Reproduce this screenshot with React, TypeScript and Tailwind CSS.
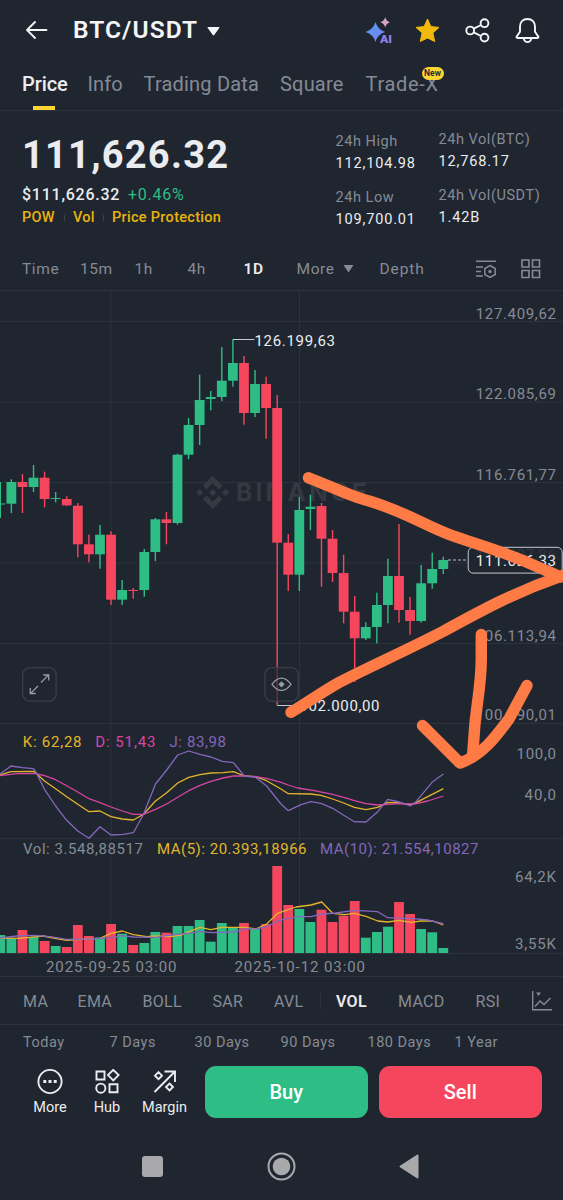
import clsx from 'clsx';
import React from 'react';

type Candle = [
  up: boolean,
  top: number,
  bottom: number,
  high: number,
  low: number,
  volume: number,
];

const GREEN = '#2ebd85';
const RED = '#f6465d';
const YELLOW = '#e3b52b';
const PINK = '#d845a4';
const PURPLE = '#8467bb';
const MUTED = '#858b95';
const GRID = '#2d333c';

const STEP = 11.075;

// body top, body bottom, high, low, top of the volume bar
const CANDLES: Candle[] = [
  [true, 503.5, 504.5, 482, 518, 935],
  [true, 482, 503.7, 479.3, 513, 938.3],
  [false, 482, 487, 474, 513, 930],
  [true, 477.7, 487, 465, 492, 937],
  [false, 477.7, 499, 471.7, 507.3, 941],
  [true, 498, 499, 492, 502.3, 946],
  [false, 499, 505.3, 496.3, 506, 947],
  [false, 505.7, 544.3, 503, 557.3, 925],
  [false, 544.3, 554.3, 534.7, 562.3, 936],
  [true, 534.7, 554.3, 525, 568.7, 937.5],
  [false, 534.7, 599.7, 531.3, 605, 924],
  [true, 590, 599.7, 580, 605, 933.7],
  [false, 590, 591, 588, 598.7, 945],
  [true, 552, 590, 549, 596.7, 943],
  [true, 519.3, 552, 518, 561, 932],
  [false, 519.3, 523, 512, 544.3, 932.7],
  [true, 454.7, 523, 453.7, 524.7, 926],
  [true, 425, 454.7, 418, 459.3, 926],
  [true, 400, 425, 374.7, 445, 920],
  [true, 397, 399, 391, 410.3, 941.7],
  [true, 380.7, 397, 347, 401, 923],
  [true, 363, 380.7, 339.5, 386.7, 928],
  [false, 363, 413, 356, 424.7, 923],
  [true, 384, 413, 370, 417, 929],
  [false, 384, 408, 376.7, 438.7, 924],
  [false, 408, 542.7, 395, 705, 866],
  [false, 542.7, 574.7, 534, 591, 905],
  [true, 510, 574.7, 497, 591, 909],
  [true, 506.7, 509, 494.7, 530, 922],
  [false, 506, 538.7, 503, 586.7, 909.7],
  [false, 538.7, 573, 530, 582, 922],
  [false, 573, 611.7, 554.7, 623.3, 915.7],
  [false, 611.7, 638.3, 596, 682, 901],
  [true, 627, 638.3, 622.3, 640, 937.7],
  [true, 605, 627, 592.7, 643.3, 932],
  [true, 576, 605, 558.7, 623.3, 926.7],
  [false, 576, 610, 524, 622.7, 902],
  [false, 610, 621, 597, 634.7, 914],
  [true, 583.3, 621, 565, 622.7, 929],
  [true, 569, 583.3, 552.7, 588.7, 932.3],
  [true, 560, 569, 556.7, 574, 948],
];

const LINES = [
  {
    color: YELLOW,
    points:
      '0,775 11,771.7 33.5,771.3 36,773.3 44.5,781 55.6,788.7 66.7,796.7 77.8,804.3 89,811.7 100,811 111,816.7 122.3,819 133.4,820 143.5,814.3 155.5,801 166.7,792.7 177.7,783 188.8,777.3 200,774.7 211,773 223,772.7 233.4,771.7 244.4,776 255.5,776.7 266.6,780.7 281,789 288.3,793.7 311,794 321,795.3 332.7,799 343.7,803 354.4,807.3 366,809.7 377.7,807.3 387.7,802.3 399.4,803 410.4,804.7 416,802.7 443.4,788.7',
  },
  {
    color: PINK,
    points:
      '0,775.7 17,773.7 36,773.7 44.5,775.7 55.6,779.7 66.7,785.7 77.8,792 89,798.7 100,802.7 111,807 122.3,811 133.4,814.3 143.5,814.3 155.5,809.3 166.7,804 177.7,797.3 188.8,790.7 200,785.3 211,781.3 223,778 233.4,776 244.4,776 255.5,776.7 266.6,778.3 281,782.3 288.3,785 297.7,788 314.3,790.7 332.7,794.3 343.7,797.3 354.4,800.7 366,803.7 377.7,805 387.7,804.3 399.4,803.7 414.3,804 427.7,801 443.4,796',
  },
  {
    color: PURPLE,
    points:
      '0,774 11,766 22.3,767.7 33.4,768.7 35.7,771.7 44.5,789.3 55.6,806 66.7,820.3 77.8,831 89,838.3 100,826.7 111,835 123.3,834.3 133.4,832.7 143.5,814.3 155.5,784 166.7,770 177.7,755 188.8,751 200,754.3 211,757 222.3,761.3 233.4,762.7 244.4,776 255.5,777.3 266.6,786 281,804 288.3,810.7 301,804.7 311,801.7 321,803.3 332.7,808.3 343.7,815.3 354.4,821.7 366,822 377.7,811.7 387.7,799.3 399.4,802 410.4,806 416,801.7 432.7,781.7 443.4,774',
  },
  {
    color: YELLOW,
    points:
      '0,938 20,938.3 43.3,936 55,938.3 66.7,940.3 80,939.3 100,938.3 111,933.3 122.3,931 133.3,934.7 146.7,936.7 155.7,936 170,936.7 181.7,935 191.7,930.7 200,927.3 211,929.7 221.7,927.3 245,927.3 255.7,929 266.7,924 277.7,913.3 283,911.3 296,907 311,905 321.7,902 332.7,913.3 344.3,914.7 354.3,913.3 366,916.3 377.7,921 387.7,922 399.3,920.3 411,922.3 421,921 432.7,921 443.3,925',
  },
  {
    color: PURPLE,
    points:
      '0,938 16.7,936 33.3,935.3 50,936.7 66.7,939.3 90,939 111,937.7 122.3,935.7 133.3,937 155.7,937.3 170,935 189,933.3 200,931.3 211,932.7 233.3,932 246.7,928.7 255.7,929 266.7,926.7 277.7,921 283,919.7 297.7,916.7 311,916.7 322.7,914 336,913 354.3,910.3 377.7,911.7 387.7,917.7 399.3,918.3 411,918.3 427.7,920 443.3,923.7',
  },
];

interface LabelProps {
  x: number;
  end: number;
  y: number;
  fill?: string;
  children: string;
}

const Label: React.FC<LabelProps> = ({ x, end, y, fill = MUTED, children }) => (
  <text x={x} y={y} textLength={end - x} fontSize={15} fill={fill}>
    {children}
  </text>
);

const Chart: React.FC = () => (
  <svg className="block shrink-0" width={563} height={686} viewBox="0 290 563 686">
    <g stroke={GRID} strokeWidth={1}>
      {[290.5, 321.5, 402, 482.5, 563, 643.5, 723.5, 838.5, 953.5].map((y) => (
        <line key={y} x1={0} x2={563} y1={y} y2={y} />
      ))}
      <line x1={111} x2={111} y1={290} y2={953} />
      <line x1={299.5} x2={299.5} y1={290} y2={953} />
    </g>

    <g fill="#343942">
      <path d="M212.7 476l9.8 9.8-3.6 3.6-6.2-6.2-6.2 6.2-3.6-3.6zM212.7 509l9.8-9.8-3.6-3.6-6.2 6.2-6.2-6.2-3.6 3.6zM212.7 488.8l3.7 3.7-3.7 3.7-3.7-3.7zM199.7 488.9l3.6 3.6-3.6 3.6-3.6-3.6zM225.7 488.9l3.6 3.6-3.6 3.6-3.6-3.6z" />
      <text
        className="font-['Inter',sans-serif]"
        x={236}
        y={501.3}
        fontSize={24.5}
        fontWeight={700}
        textLength={131}
      >
        BINANCE
      </text>
    </g>

    <Label x={475.7} end={556} y={318.5}>127.409,62</Label>
    <Label x={475.7} end={556} y={399.3}>122.085,69</Label>
    <Label x={475.7} end={556} y={479.7}>116.761,77</Label>
    <Label x={475.7} end={556} y={640.7}>106.113,94</Label>
    <Label x={475.7} end={556} y={719.8}>100.790,01</Label>
    <Label x={516.5} end={556} y={759}>100,0</Label>
    <Label x={524.5} end={556} y={799.6}>40,0</Label>
    <Label x={515} end={556} y={881.9}>64,2K</Label>
    <Label x={515} end={556} y={949.3}>3,55K</Label>

    {CANDLES.map(([up, top, bottom, high, low, volume], i) => {
      const x = 0.3 + i * STEP;
      return (
        <g key={i} fill={up ? GREEN : RED}>
          <rect x={x - 0.7} y={high} width={1.4} height={low - high} />
          <rect x={x - 4.9} y={top} width={9.8} height={bottom - top} />
          <rect x={x - 4.9} y={volume} width={9.8} height={953 - volume} />
        </g>
      );
    })}

    {LINES.map((line, i) => (
      <polyline
        key={i}
        points={line.points}
        fill="none"
        stroke={line.color}
        strokeWidth={1.3}
        strokeLinejoin="round"
      />
    ))}

    <path d="M232.9 339.5h21.5M277.2 705.5h22" stroke="#c5c9cf" fill="none" />
    <Label x={254.5} end={335} y={345.5} fill="#eaecef">126.199,63</Label>
    <Label x={299.5} end={379.5} y={711.3} fill="#eaecef">102.000,00</Label>

    <path d="M448 560h20" stroke="#b5bac1" strokeDasharray="3 2" />
    <rect x={468.2} y={547.3} width={94} height={25.8} rx={5} fill="#202630" stroke="#c5c9cf" />
    <Label x={475.7} end={556} y={559.7} fill="#30363f">111.437,86</Label>
    <Label x={475.7} end={556} y={565.7} fill="#eaecef">111.626,33</Label>

    <Label x={22.8} end={81.5} y={746.7} fill={YELLOW}>K: 62,28</Label>
    <Label x={95.3} end={155.5} y={746.7} fill={PINK}>D: 51,43</Label>
    <Label x={169.5} end={226} y={746.7} fill={PURPLE}>J: 83,98</Label>
    <Label x={23} end={143} y={854.3}>Vol: 3.548,88517</Label>
    <Label x={157} end={306.5} y={854.3} fill={YELLOW}>MA(5): 20.393,18966</Label>
    <Label x={320} end={478.5} y={854.3} fill={PURPLE}>MA(10): 21.554,10827</Label>
    <Label x={46} end={176.5} y={971.9}>2025-09-25 03:00</Label>
    <Label x={234.5} end={365} y={971.9}>2025-10-12 03:00</Label>

    <g fill="#202630" fillOpacity={0.65} stroke="#383e47" strokeWidth={1.3}>
      <rect x={22.7} y={667.7} width={33.4} height={33.4} rx={7} />
      <rect x={264.9} y={667.7} width={33.4} height={33.4} rx={7} />
    </g>
    <g fill="none" stroke="#989ca3" strokeWidth={1.3}>
      <path d="M41 682.5l7.6-7.6M43.3 675h5.4v5.4M38 686l-7.6 7.6M30.3 688v5.5h5.4" />
      <path d="M272 684.3q9.5-12.2 19 0q-9.5 12.2-19 0z" />
    </g>
    <path d="M281.5 681.2l3.1 3.1-3.1 3.1-3.1-3.1z" fill="#989ca3" />

    {/* hand drawn trend lines */}
    <g
      fill="none"
      stroke="#ff7b45"
      strokeWidth={11.4}
      strokeLinecap="round"
      strokeLinejoin="round"
    >
      <path d="M308.5 477.8C328 485 347 495 364 499.5C401 509.500 424 525 452 535.500C476 544 503 552 523 560.500L561 577" />
      <path d="M291 712.3C307 703 322 692 339 682.500C365 669 406 650.500 443 631.500C484 609 517 591 566 574.500" />
      <path d="M481.300 634.500V660C481 688 475.500 710 474.500 730L472.500 757" />
      <path d="M422.500 725.500L460 763C483 755 497 735 509 719L527 685.500" />
    </g>
  </svg>
);

const AiIcon: React.FC = () => (
  <svg width={30} height={30} viewBox="0 0 30 30">
    <defs>
      <linearGradient id="spark" x1="0" y1="0" x2="1" y2="1">
        <stop offset="0" stopColor="#45a3f5" />
        <stop offset="1" stopColor="#8b78f5" />
      </linearGradient>
      <linearGradient id="spark-small" x1="0" y1="0" x2="1" y2="1">
        <stop offset="0" stopColor="#b9a0f5" />
        <stop offset="1" stopColor="#f5a58c" />
      </linearGradient>
    </defs>
    <path d="M10.500 7Q12.500 14.500 20 17Q12.500 19.500 10.500 27Q8.500 19.500 .5 17Q8.500 14.500 10.500 7z" fill="url(#spark)" />
    <path d="M20.200 2Q21.300 6.200 25 7.200Q21.300 8.200 20.200 12.500Q19.100 8.200 15.200 7.200Q19.100 6.200 20.200 2z" fill="url(#spark-small)" />
    <text
      x={15}
      y={28}
      fontSize={11}
      fontWeight={900}
      fill="#9180e8"
      stroke="#202630"
      strokeWidth={2}
      paintOrder="stroke"
      textLength={12}
      lengthAdjust="spacingAndGlyphs"
    >
      AI
    </text>
  </svg>
);

const Header: React.FC = () => (
  <header className="flex h-[60px] shrink-0 items-center pl-[25px] pr-[23px] text-[#f4f5f7]">
    <svg width={23} height={18} viewBox="0 0 23 18" fill="none" stroke="currentColor" strokeWidth={1.8}>
      <path d="M21.500 9H2M10 1L2 9l8 8" strokeLinecap="round" strokeLinejoin="round" />
    </svg>
    <h1 className="ml-[25px] w-[127px] shrink-0 whitespace-nowrap text-[24.5px] font-semibold tracking-[1.05px]">
      BTC/USDT
    </h1>
    <svg className="ml-[7px] mt-0.5" width={13} height={9} viewBox="0 0 13 9" fill="currentColor">
      <path d="M1.200 0h10.600q1.200 0 .5 1L7.200 8q-.7.900-1.400 0L.7 1Q0 0 1.200 0z" />
    </svg>
    <div className="ml-auto flex items-center gap-[25px]">
      <AiIcon />
      <svg className="-ml-[5px]" width={25} height={25} viewBox="0 0 25 25" fill="#f0b90b" stroke="#f0b90b" strokeLinejoin="round">
        <path d="M12.500 1l3.400 7.600 8.100.8-6.100 5.500 1.800 8.600-7.200-3.500-7.200 3.500 1.800-8.600L1 9.400l8.100-.8z" />
      </svg>
      <svg width={25} height={25} viewBox="0 0 25 25" fill="none" stroke="currentColor" strokeWidth={1.9}>
        <circle cx={5.2} cy={12.5} r={3.9} />
        <circle cx={19.5} cy={5.2} r={3.9} />
        <circle cx={19.5} cy={19.6} r={3.9} />
        <path d="M8.700 10.700l7.300-3.700M8.700 14.300l7.300 3.700" />
      </svg>
      <svg width={25} height={27} viewBox="0 0 25 27" fill="none" stroke="currentColor" strokeWidth={1.9} strokeLinejoin="round">
        <path d="M12.500 2C7.800 2 5 5.200 5 9.700v5.100L1.700 19.600q-.6 1.400.8 1.400h20q1.400 0 .8-1.400L20 14.800V9.700C20 5.200 17.200 2 12.500 2z" />
        <path d="M8.700 22c1.700 4.200 5.900 4.200 7.600 0" />
      </svg>
    </div>
  </header>
);

const TABS = [
  { name: 'Price', width: 'w-[65.5px]', tracking: 'tracking-[-0.1px]' },
  { name: 'Info', width: 'w-[56px]', tracking: 'tracking-[0.1px]' },
  { name: 'Trading Data', width: 'w-[136.5px]', tracking: 'tracking-[0.2px]' },
  { name: 'Square', width: 'w-[85.5px]', tracking: 'tracking-[0.2px]' },
  { name: 'Trade-X', width: 'w-[80px]', tracking: 'tracking-[0.7px]' },
];

const Tabs: React.FC = () => (
  <nav className="flex h-[51px] shrink-0 border-b border-[#2d333c] pl-[22px] text-[20px]">
    {TABS.map((tab, i) => (
      <div
        key={tab.name}
        className={clsx(
          'relative flex h-[50px] shrink-0 items-center whitespace-nowrap pb-0.5',
          tab.width,
          tab.tracking,
          i === 0 ? 'font-medium text-[#eaecef]' : 'text-[#858b95]',
        )}
      >
        {tab.name}
        {i === 0 && <span className="absolute bottom-0 left-[11px] h-[4px] w-[22px] bg-[#fcd535]" />}
        {i === 4 && (
          <span className="absolute left-[56px] top-[7px] flex h-[13px] w-[22px] items-center justify-center rounded-full bg-[#fcd535] text-[8.5px] font-semibold tracking-normal text-[#202630]">
            New
          </span>
        )}
      </div>
    ))}
  </nav>
);

const Stat: React.FC<{ label: string; value: string }> = ({ label, value }) => (
  <div className="whitespace-nowrap text-[14.5px] leading-[22px]">
    <div className="tracking-[0.55px] text-[#858b95]">{label}</div>
    <div className="tracking-[0.85px] text-[#eaecef]">{value}</div>
  </div>
);

const Summary: React.FC = () => (
  <section className="flex h-[137px] shrink-0">
    <div className="w-[335.5px] shrink-0 pl-[22px] pt-[22px]">
      <div className="h-[45px] text-[38px] font-bold leading-[45px] tracking-[1.25px] text-[#eaecef]">
        111,626.32
      </div>
      <div className="flex h-[33px] items-center text-[16px] tracking-[0.75px]">
        <span className="w-[106px] font-medium text-[#eaecef]">$111,626.32</span>
        <span className="text-[#2ebd85]">+0.46%</span>
      </div>
      <div className="flex h-[14px] items-center whitespace-nowrap text-[14.5px] font-medium tracking-[0.3px] text-[#e8b30e]">
        <span className="w-[42px]">POW</span>
        <i className="h-1.5 w-px bg-[#3b414b]" />
        <span className="ml-2 w-[30px]">Vol</span>
        <i className="h-1.5 w-px bg-[#3b414b]" />
        <span className="ml-2">Price Protection</span>
      </div>
    </div>
    <div className="flex w-[103px] shrink-0 flex-col gap-3 pt-[20px]">
      <Stat label="24h High" value="112,104.98" />
      <Stat label="24h Low" value="109,700.01" />
    </div>
    <div className="flex flex-col gap-3 pt-[18px]">
      <Stat label="24h Vol(BTC)" value="12,768.17" />
      <Stat label="24h Vol(USDT)" value="1.42B" />
    </div>
  </section>
);

const INTERVALS = [
  ['Time', 'w-[58px]'],
  ['15m', 'w-[54.5px]'],
  ['1h', 'w-[53px]'],
  ['4h', 'w-[56px]'],
  ['1D', 'w-[53px]'],
  ['More', 'w-[46px]'],
];

const Intervals: React.FC = () => (
  <div className="flex h-[42px] shrink-0 items-center pl-[22px] text-[15.5px] tracking-[0.6px] text-[#858b95]">
    {INTERVALS.map(([name, width]) => (
      <span
        key={name}
        className={clsx('shrink-0 pt-0.5', width, name === '1D' && 'font-semibold text-[#eaecef]')}
      >
        {name}
      </span>
    ))}
    <svg width={11} height={8} viewBox="0 0 11 8" fill="currentColor">
      <path d="M.5 0h10L5.500 7.500z" />
    </svg>
    <span className="ml-[26px] w-[96px] shrink-0 pt-0.5 tracking-[0.9px]">Depth</span>
    <svg width={21} height={19} viewBox="0 0 21 19" fill="none" stroke="currentColor" strokeWidth={1.5}>
      <path d="M0 1.200h20M0 7h7M0 11.500h5M0 16h7" />
      <path d="M14 5.500l5.200 3v6l-5.200 3-5.200-3v-6z" />
      <circle cx={14} cy={11.5} r={1.7} fill="currentColor" stroke="none" />
    </svg>
    <svg className="ml-6" width={20} height={20} viewBox="0 0 20 20" fill="none" stroke="currentColor" strokeWidth={1.6}>
      <path d="M1 1h7v7H1zM11.500 1h7v7h-7zM1 11.500h7v7H1zM11.500 11.500h7v7h-7z" />
    </svg>
  </div>
);

const INDICATORS = [
  ['MA', 'w-[54.5px]'],
  ['EMA', 'w-[65px]'],
  ['BOLL', 'w-[70px]'],
  ['SAR', 'w-[61.5px]'],
  ['AVL', 'w-[46px]'],
];

const SUB_INDICATORS = [
  ['VOL', 'w-[62px]'],
  ['MACD', 'w-[77.5px]'],
  ['RSI', 'w-[56.5px]'],
];

const Indicators: React.FC = () => (
  <div className="flex h-[49px] shrink-0 items-center border-y border-[#2d333c] pl-[23px] text-[16px] tracking-[0.3px] text-[#858b95]">
    {INDICATORS.map(([name, width]) => (
      <span key={name} className={clsx('shrink-0 pt-0.5', width)}>
        {name}
      </span>
    ))}
    <i className="mr-[15px] h-4 w-px shrink-0 bg-[#2d333c]" />
    {SUB_INDICATORS.map(([name, width]) => (
      <span
        key={name}
        className={clsx('shrink-0 pt-0.5', width, name === 'VOL' && 'font-semibold text-[#eaecef]')}
      >
        {name}
      </span>
    ))}
    <svg className="shrink-0" width={20} height={20} viewBox="0 0 20 20" fill="none" stroke="currentColor" strokeWidth={1.4}>
      <path d="M.7 0v18.800H20M3 15.500l5-5.500 4 3.500 6.500-6.500" />
      <path d="M4 1.500h5L6.500 5z" fill="currentColor" stroke="none" />
    </svg>
  </div>
);

const PERIODS = [
  ['Today', 'w-[86.5px]'],
  ['7 Days', 'w-[85px]'],
  ['30 Days', 'w-[86px]'],
  ['90 Days', 'w-[87px]'],
  ['180 Days', 'w-[87px]'],
  ['1 Year', 'w-[60px]'],
];

const Periods: React.FC = () => (
  <div className="flex h-[34px] shrink-0 items-center whitespace-nowrap pl-[23px] pt-0.5 text-[14.5px] tracking-[0.5px] text-[#858b95]">
    {PERIODS.map(([name, width]) => (
      <span key={name} className={clsx('shrink-0', width)}>
        {name}
      </span>
    ))}
  </div>
);

interface ActionProps {
  name: string;
  className: string;
  children: React.ReactNode;
}

const Action: React.FC<ActionProps> = ({ name, className, children }) => (
  <div className={clsx('flex shrink-0 flex-col items-center pt-[3px]', className)}>
    <svg width={26} height={26} viewBox="0 0 26 26" fill="none" stroke="#eaecef" strokeWidth={1.9}>
      {children}
    </svg>
    <span className="mt-[3px] text-[14.5px] leading-5 text-[#eaecef]">{name}</span>
  </div>
);

const ActionBar: React.FC = () => (
  <div className="flex h-[60px] shrink-0 pl-[22px] pt-[7px]">
    <Action name="More" className="w-[56px]">
      <circle cx={13} cy={12.5} r={11.6} />
      <path d="M6.300 12.500h3M11.500 12.500h3M16.700 12.500h3" strokeWidth={3} />
    </Action>
    <Action name="Hub" className="w-[58px]">
      <path d="M2.500 2.500h8v8h-8zM15.500 15.200h8v8h-8zM19.300.8l5.300 5.300-5.300 5.300L14 6.100z" />
      <circle cx={6.8} cy={19.2} r={4.6} />
    </Action>
    <Action name="Margin" className="w-[57px]">
      <path d="M2.500 23L23 2.500M12.500 2.500H23V13M6.500 3.200l3.500 3.500-3.500 3.500L3 6.700zM17.500 14.500l3.500 3.500-3.500 3.500-3.500-3.500z" />
    </Action>
    <button className="ml-3 h-[52px] w-[162.5px] rounded-[11px] bg-[#2ebd85] text-[20px] font-medium text-white">
      Buy
    </button>
    <button className="ml-[11.5px] h-[52px] w-[162.5px] rounded-[11px] bg-[#f6465d] text-[20px] font-medium text-white">
      Sell
    </button>
  </div>
);

const SystemNav: React.FC = () => (
  <div className="flex h-[81px] shrink-0 items-center pl-[142px] pt-[13px]">
    <i className="size-[21px] rounded-[3px] bg-[#a9a9ac]" />
    <svg className="ml-[104px]" width={29} height={29} viewBox="0 0 29 29">
      <circle cx={14.5} cy={14.5} r={13} fill="none" stroke="#a9a9ac" strokeWidth={2} />
      <circle cx={14.5} cy={14.5} r={8.8} fill="#a9a9ac" />
    </svg>
    <svg className="ml-[103px]" width={20} height={25} viewBox="0 0 20 25">
      <path d="M18.500 1.500v22L1.500 12.500z" fill="#a9a9ac" stroke="#a9a9ac" strokeWidth={2} strokeLinejoin="round" />
    </svg>
  </div>
);

const App: React.FC = () => (
  <div className="flex h-[1200px] w-[563px] flex-col overflow-hidden bg-[#202630] font-['Roboto','Liberation_Sans',sans-serif]">
    <Header />
    <Tabs />
    <Summary />
    <Intervals />
    <Chart />
    <Indicators />
    <Periods />
    <ActionBar />
    <SystemNav />
  </div>
);

export default App;
